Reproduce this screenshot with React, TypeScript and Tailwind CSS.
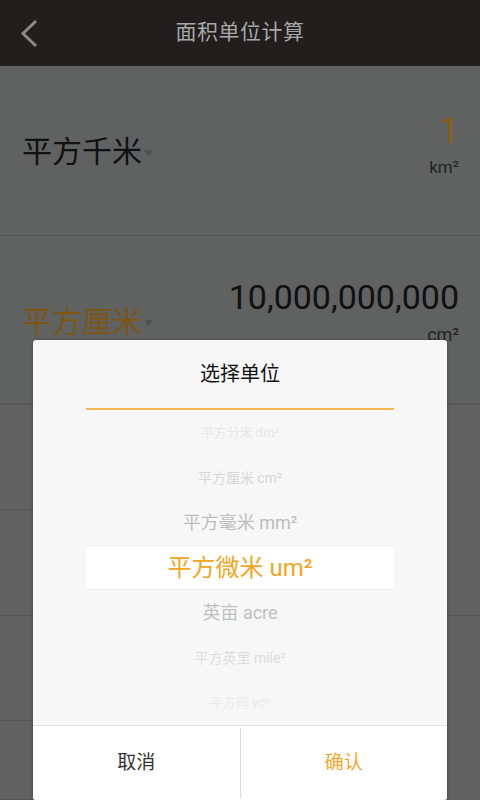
const font = { fontFamily: "Roboto, 'Noto Sans CJK SC', sans-serif" };

const items = [
  { label: "平方分米 dm²", cls: "text-[13px] text-[#e6e6e6]" },
  { label: "平方厘米 cm²", cls: "text-[14px] text-[#d6d6d6]" },
  { label: "平方毫米 mm²", cls: "text-[18px] text-[#bcbcbc]" },
  { label: "平方微米 um²", cls: "text-[24px] text-[#f2a51e]", selected: true },
  { label: "英亩 acre", cls: "text-[18px] text-[#c0c0c0]" },
  { label: "平方英里 mile²", cls: "text-[14px] text-[#dcdcdc]" },
  { label: "平方码 yd²", cls: "text-[13px] text-[#e9e9e9]" },
];

const Caret = () => (
  <svg width="9" height="7" viewBox="0 0 9 7" className="ml-[2px] mt-[4px]">
    <path d="M0 0 L9 0 L4.5 6 Z" fill="#4f5150" />
  </svg>
);

export default function App() {
  return (
    <div className="relative w-[480px] h-[800px] overflow-hidden bg-[#5f6261]" style={font}>
      {/* top bar */}
      <div className="relative h-[66px] bg-[#221e1e] flex items-center justify-center">
        <svg width="20" height="30" viewBox="0 0 20 30" className="absolute left-[20px] top-[19px]">
          <path d="M16 2 L3 14.5 L16 27" fill="none" stroke="#8a8a8a" strokeWidth="3" />
        </svg>
        <span className="text-[21px] text-[#a8a8a8] tracking-[0.5px]">面积单位计算</span>
      </div>

      {/* from unit */}
      <div className="h-[170px] border-b border-[#545655] flex items-center justify-between pl-[22px] pr-[21px]">
        <div className="flex items-center mt-[2px]">
          <span className="text-[30px] leading-none text-[#111]">平方千米</span>
          <Caret />
        </div>
        <div className="flex flex-col items-end -mt-[12px]">
          <span className="text-[36px] leading-none text-[#8a5f14]">1</span>
          <span className="text-[17px] leading-none text-[#222] mt-[10px]">km²</span>
        </div>
      </div>

      {/* to unit */}
      <div className="h-[169px] border-b-2 border-[#545655] flex items-center justify-between pl-[22px] pr-[21px]">
        <div className="flex items-center mt-[4px]">
          <span className="text-[30px] leading-none text-[#7d5614]">平方厘米</span>
          <Caret />
        </div>
        <div className="flex flex-col items-end -mt-[16px]">
          <span className="text-[34px] leading-none text-[#111]">10,000,000,000</span>
          <span className="text-[18px] leading-none text-[#222] mt-[12px]">cm²</span>
        </div>
      </div>

      {/* keypad (dimmed) */}
      <div className="grid grid-cols-4 h-[395px] bg-[#626161]">
        <div className="col-span-3 grid grid-cols-3 grid-rows-[105px_106px_105px_79px]">
          {Array.from({ length: 12 }).map((_, i) => (
            <div key={i} className="border-b border-r border-[#555555]" />
          ))}
        </div>
        <div className="grid grid-rows-[211px_184px]">
          <div className="border-b border-[#555555]" />
          <div />
        </div>
      </div>

      {/* dialog */}
      <div className="absolute left-[33px] top-[340px] w-[414px] h-[460px] bg-[#f7f7f7] rounded-[3px] shadow-[0_0_3px_rgba(0,0,0,0.35)] flex flex-col overflow-hidden">
        <div className="h-[68px] flex items-center justify-center">
          <span className="text-[20px] text-[#111]">选择单位</span>
        </div>
        <div className="mx-[53px] h-[2px] bg-[#f5b64c]" />
        <div className="flex flex-col mx-[53px]">
          {items.map((it) => (
            <div
              key={it.label}
              className={`h-[45px] flex items-center justify-center ${
                it.selected ? "bg-white border-y border-[#ececec]" : ""
              }`}
            >
              <span className={`leading-none ${it.cls}`}>{it.label}</span>
            </div>
          ))}
        </div>
        <div className="flex-1 flex bg-white border-t border-[#e2e2e2]">
          <button className="flex-1 flex items-center justify-center text-[19px] text-[#333] border-r border-[#dedede] my-[2px]">
            取消
          </button>
          <button className="flex-1 flex items-center justify-center text-[19px] text-[#f0a82e]">
            确认
          </button>
        </div>
      </div>
    </div>
  );
}
